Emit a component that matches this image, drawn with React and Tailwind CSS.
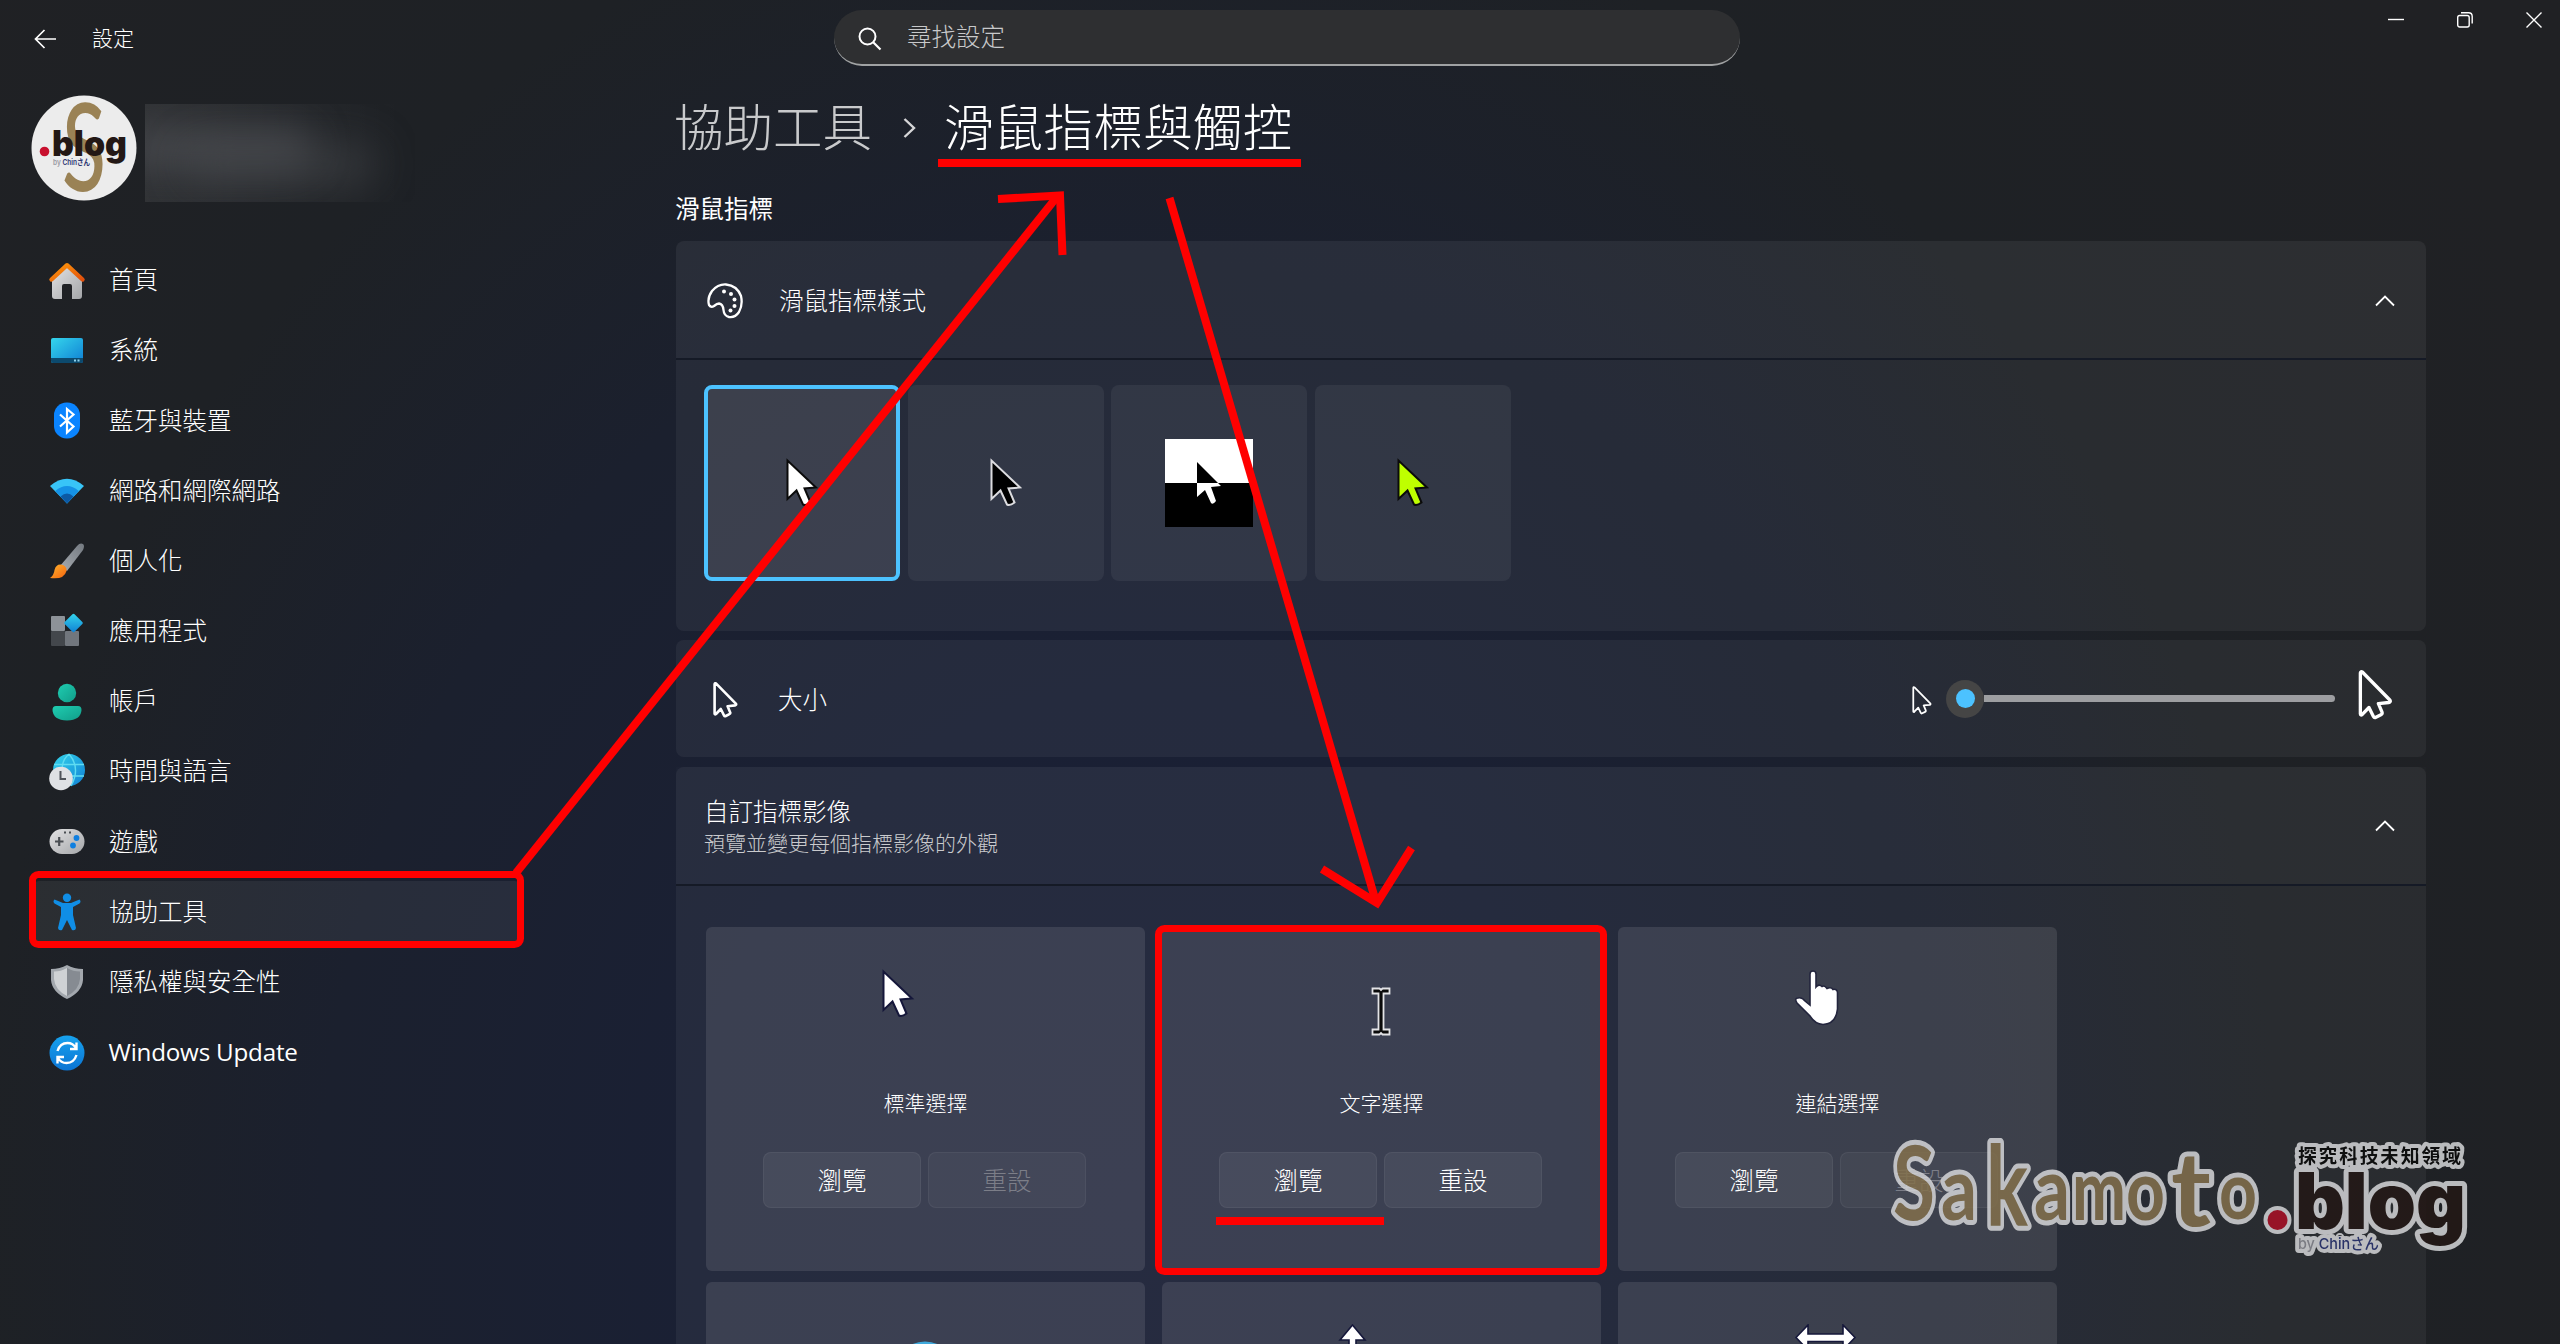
import React, { useState } from "react";

const CursorOutline = ({ className, strokeWidth = 2.6 }) => (
  <svg viewBox="0 0 25 36" fill="none" className={className}>
    <path
      d="M1.6 2.2V31.5Q1.8 33 3 32L7.8 27L11 33.4Q11.6 34.6 12.8 34L16.4 32.2Q17.6 31.6 17.2 30.4L14.6 24.2L22 23.4Q23.8 23 22.8 21.6L3.2 1.6Q1.8 .6 1.6 2.2Z"
      stroke="white"
      strokeWidth={strokeWidth}
      strokeLinejoin="round"
    />
  </svg>
);

const Pointer = ({ fill, stroke }) => (
  <path
    d="M1.5 2.5V41L10.5 32.5L17 46.5Q20 48 24.5 44.5L18.5 30.5L30 29.5Z"
    fill={fill}
    stroke={stroke}
    strokeWidth="2"
  />
);

const ChevronUp = () => (
  <svg viewBox="0 0 20 12" fill="none" className="h-3 w-5">
    <path d="M1 10.5L10 1.5L19 10.5" stroke="white" strokeWidth="1.8" />
  </svg>
);

const navIcons = {
  home: (
    <>
      <path d="M4 17L19 5L34 17V34Q34 37 31 37H24V24Q24 22 22 22H16Q14 22 14 24V37H7Q4 37 4 34Z" fill="url(#silver)" />
      <path d="M3.5 17.5L19 3.2L34.5 17.5" fill="none" stroke="url(#orange)" strokeWidth="4.4" strokeLinecap="round" strokeLinejoin="round" />
    </>
  ),
  system: (
    <>
      <rect x="3" y="6" width="32" height="25" rx="2" fill="url(#sky)" />
      <path d="M3 26H35V29Q35 31 33 31H5Q3 31 3 29Z" fill="#0c4a6e" />
      <path d="M26 28.5H28M29.5 28.5H31.5" stroke="#8fd3ee" strokeWidth="1.8" />
    </>
  ),
  bluetooth: (
    <>
      <rect x="6" y="0.5" width="26" height="36" rx="12.5" fill="#0a84ff" />
      <path d="M12 12.5L25.5 24.5L19 30.5V7L25.5 12.5L12 24.5" fill="none" stroke="white" strokeWidth="2.2" />
    </>
  ),
  network: (
    <>
      <path d="M2 14Q19 -0.5 36 14L19 31.5Z" fill="#38c5f8" />
      <path d="M7.2 19Q19 9 30.8 19L19 31.5Z" fill="#1592e6" />
      <path d="M12.5 24.5Q19 18.5 25.5 24.5L19 31.5Z" fill="#0c59a4" />
    </>
  ),
  brush: (
    <>
      <path d="M12 24L29 4Q32 0.5 35 2Q37 3.5 35 8L19 29Z" fill="url(#steel)" />
      <path d="M2 36Q6 33 6.500 28Q8 22 13 22.500Q19 23.500 18.500 29Q16 38 2 36Z" fill="url(#flame)" />
    </>
  ),
  apps: (
    <>
      <rect x="3" y="4" width="14" height="15" rx="1" fill="#8d9298" />
      <rect x="3" y="19" width="14" height="15" rx="1" fill="#43474c" />
      <rect x="17" y="19" width="14" height="15" rx="1" fill="#71767d" />
      <rect x="18.500" y="4" width="14" height="14" rx="1.500" fill="url(#sky)" transform="rotate(45 25.5 11)" />
    </>
  ),
  account: (
    <>
      <circle cx="19" cy="10" r="9.200" fill="url(#teal)" />
      <path d="M8 23H30Q33.500 23 33.500 27Q33 37 19 37.500Q5 37 4.500 27Q4.500 23 8 23Z" fill="url(#teal)" />
    </>
  ),
  time: (
    <>
      <circle cx="21" cy="17" r="16" fill="url(#sky)" />
      <path d="M6 11.500H36M18 23H36M21 1Q11 10 16 22M21 1Q33 15 23 33" fill="none" stroke="#5fdcf1" strokeWidth="1.400" />
      <circle cx="13" cy="25.500" r="11.800" fill="#dfe1e4" />
      <path d="M12.500 18V26H18" fill="none" stroke="#50545a" strokeWidth="2" />
    </>
  ),
  gaming: (
    <>
      <rect x="1.500" y="6" width="35" height="25" rx="12.500" fill="url(#silver)" />
      <path d="M7 18.500H15.500M11.200 14V23" stroke="#4a4e53" strokeWidth="2.200" />
      <circle cx="28.500" cy="15" r="2.900" fill="#0f7fe0" />
      <circle cx="25" cy="22.500" r="2.900" fill="#0f7fe0" />
      <path d="M16 9.500H18M21 9.500H23" stroke="#4a4e53" strokeWidth="2" />
    </>
  ),
  access: (
    <g fill="#108ee6">
      <circle cx="19" cy="4.800" r="4.200" />
      <path d="M6.500 6.500Q4.500 8.500 6.500 10.500L13 14V22L10 35Q10.500 38 14 37L19 27L24 37Q27.500 38 28 35L25 22V14L31.500 10.500Q33.500 8.500 31.500 6.500L23 10H15Z" />
    </g>
  ),
  shield: (
    <>
      <path d="M19 2Q26 6 35 6V17Q34 29 19 36Q4 29 3 17V6Q12 6 19 2Z" fill="#a3a8ae" />
      <path d="M19 5V33Q7 27 6 16V8.500Q13 8.500 19 5Z" fill="#cfd2d5" />
      <path d="M19 5V33Q31 27 32 16V8.500Q25 8.500 19 5Z" fill="#868b92" />
    </>
  ),
  update: (
    <>
      <circle cx="19" cy="19" r="17.500" fill="url(#azure)" />
      <path d="M9.500 17Q12 9 19.500 9Q25 9 28 14M28.500 8.500V15H22M28.500 21Q26 29 18.500 29Q13 29 10 24M9.500 29.500V23H16" fill="none" stroke="white" strokeWidth="2.400" />
    </>
  ),
};

const navItems = [
  { id: "home", label: "首頁" },
  { id: "system", label: "系統" },
  { id: "bluetooth", label: "藍牙與裝置" },
  { id: "network", label: "網路和網際網路" },
  { id: "brush", label: "個人化" },
  { id: "apps", label: "應用程式" },
  { id: "account", label: "帳戶" },
  { id: "time", label: "時間與語言" },
  { id: "gaming", label: "遊戲" },
  { id: "access", label: "協助工具" },
  { id: "shield", label: "隱私權與安全性" },
  { id: "update", label: "Windows Update", latin: true },
];

const pointerTiles = [
  {
    id: "normal",
    label: "標準選擇",
    canReset: false,
    art: (
      <g transform="translate(4 0)">
        <Pointer fill="white" stroke="#15173a" />
      </g>
    ),
  },
  {
    id: "text",
    label: "文字選擇",
    canReset: true,
    art: (
      <g transform="translate(37.5 18.5)">
        <path d="M1 1H8L9.500 2.500L11 1H18V6H12V42H18V47H11L9.500 45.500L8 47H1V42H7V6H1Z" fill="#0a0a0a" stroke="#e3e3e6" strokeWidth="1.800" />
      </g>
    ),
  },
  {
    id: "link",
    label: "連結選擇",
    canReset: false,
    art: (
      <path
        d="M20 5Q20 2 23 2Q26 2 26 5V18Q29 14.500 32 17.500Q34.500 16 37 19.500Q41 17.500 43 20.500Q47 19.500 47.500 23.500V40Q46 55 33 55.500Q25 55 20 47L7 34Q4 29 8 29Q12 28 15 32L20 36Z"
        fill="white"
        stroke="#23253d"
        strokeWidth="1.600"
      />
    ),
  },
  {
    id: "background",
    art: <circle cx="47" cy="48" r="27" fill="none" stroke="#3fa9dc" strokeWidth="7" />,
  },
  {
    id: "vertical",
    art: <path d="M18.500 1L31 16H22V60H15V16H6Z" fill="white" stroke="#15173a" strokeWidth="1.600" />,
  },
  {
    id: "horizontal",
    art: <path d="M6 13.500L18 1V10H53V1L65 13.500L53 26V17.500H18V26Z" fill="white" stroke="#15173a" strokeWidth="1.600" />,
  },
];

const NavGradients = () => (
  <svg className="absolute h-0 w-0">
    <defs>
      <linearGradient id="silver" x1="0" y1="0" x2="1" y2="1">
        <stop offset="0" stopColor="#e2e2e3" />
        <stop offset="1" stopColor="#a4a6a9" />
      </linearGradient>
      <linearGradient id="orange" x1="0" y1="0" x2="1" y2="1">
        <stop offset="0" stopColor="#ff9a0a" />
        <stop offset="1" stopColor="#e2500c" />
      </linearGradient>
      <linearGradient id="sky" x1="0" y1="0" x2="1" y2="1">
        <stop offset="0" stopColor="#35d6ec" />
        <stop offset="1" stopColor="#0f7fd4" />
      </linearGradient>
      <linearGradient id="steel" x1="1" y1="0" x2="0" y2="1">
        <stop offset="0" stopColor="#737980" />
        <stop offset="1" stopColor="#a7acb1" />
      </linearGradient>
      <linearGradient id="flame" x1="0" y1="0" x2="1" y2="1">
        <stop offset="0" stopColor="#ffb62e" />
        <stop offset="1" stopColor="#f5640f" />
      </linearGradient>
      <linearGradient id="teal" x1="0" y1="0" x2="1" y2="1">
        <stop offset="0" stopColor="#1fcdb1" />
        <stop offset="1" stopColor="#119d89" />
      </linearGradient>
      <linearGradient id="azure" x1="0" y1="0" x2="0" y2="1">
        <stop offset="0" stopColor="#17a2ee" />
        <stop offset="1" stopColor="#0b74d3" />
      </linearGradient>
    </defs>
  </svg>
);

const TitleBar = () => (
  <header className="flex h-[76px] shrink-0">
    <div className="flex w-[834px] items-center pl-[34px] pt-0.5">
      <svg viewBox="0 0 22 20" fill="none" className="h-5 w-[22px]">
        <path d="M22 10H1.500M10.500 1L1.500 10L10.500 19" stroke="white" strokeWidth="1.700" />
      </svg>
      <span className="ml-9 text-[21px]">設定</span>
    </div>
    <div className="mt-2.5 flex h-14 w-[906px] items-center rounded-full border-b-2 border-[#a0a2a3] bg-[#2e2f31] pl-6">
      <svg viewBox="0 0 24 24" fill="none" className="mt-1 h-6 w-6">
        <circle cx="9.500" cy="9.500" r="8" stroke="white" strokeWidth="2" />
        <path d="M15 15L22.500 22.500" stroke="white" strokeWidth="2.200" />
      </svg>
      <span className="ml-[25px] text-[24.5px] text-[#c8c9ca]">尋找設定</span>
    </div>
    <div className="ml-auto flex gap-[53px] pr-[18px] pt-3">
      <svg viewBox="0 0 16 16" fill="none" stroke="white" className="h-4 w-4">
        <path d="M0 7.500H16" strokeWidth="1.400" />
      </svg>
      <svg viewBox="0 0 16 16" fill="none" stroke="white" strokeWidth="1.400" className="h-4 w-4">
        <rect x="0.700" y="3.500" width="11.500" height="11.500" rx="2" />
        <path d="M4 0.800H11.500Q15.200 0.800 15.200 4.500V11.500" />
      </svg>
      <svg viewBox="0 0 16 16" fill="none" stroke="white" strokeWidth="1.400" className="h-4 w-4">
        <path d="M0.500 0.500L15.500 15.500M15.500 0.500L0.500 15.500" />
      </svg>
    </div>
  </header>
);

const Avatar = () => (
  <svg viewBox="0 0 106 106" className="h-[106px] w-[106px] overflow-visible">
    <circle cx="53" cy="53" r="52.500" fill="#ececec" />
    <text x="31" y="96" fontSize="122" textLength="44" lengthAdjust="spacingAndGlyphs" fill="#9a8255" className="font-['Lato'] font-medium">
      S
    </text>
    <circle cx="13.500" cy="56.500" r="4.800" fill="#c8102e" />
    <text x="21" y="61" fontSize="35" textLength="75" lengthAdjust="spacingAndGlyphs" fill="#231815" className="font-['Inter'] font-black">
      blog
    </text>
    <text x="22" y="70" fontSize="7.500" textLength="37" lengthAdjust="spacingAndGlyphs" fill="#2b3572" className="font-['Inter','Noto_Sans_CJK_JP'] font-semibold">
      <tspan fill="#9a9aa2">by </tspan>Chinさん
    </text>
  </svg>
);

const Sidebar = ({ active, onSelect }) => (
  <aside className="w-[676px] shrink-0 pt-[19px]">
    <div className="flex items-start pl-[31px]">
      <Avatar />
      {/* blurred account name */}
      <div className="relative ml-2 mt-[9px] h-[98px] w-[270px] overflow-hidden bg-linear-to-r from-white/8 to-transparent to-95%">
        <div className="absolute -left-6 top-6 h-10 w-48 rounded-full bg-[#54555a]/60 blur-[18px]" />
        <div className="absolute left-10 top-10 h-10 w-48 rounded-full bg-[#4a4b50]/50 blur-[20px]" />
      </div>
    </div>
    <nav className="mt-[47px] flex flex-col gap-[7.2px] pl-[33px]">
      {navItems.map((item) => (
        <button
          key={item.id}
          onClick={() => onSelect(item.id)}
          className={`flex h-[63px] w-[488px] items-center rounded-md pl-[14.5px] text-left text-[24.5px] ${
            item.id === active ? "bg-white/6" : ""
          }`}
        >
          <svg viewBox="0 0 38 38" className="h-[38px] w-[38px]">
            {navIcons[item.id]}
          </svg>
          <span className={item.latin ? "ml-[23px] text-[24.2px] font-normal tracking-[-0.2px]" : "ml-[23.5px]"}>
            {item.label}
          </span>
        </button>
      ))}
    </nav>
  </aside>
);

const swatches = [
  { id: "white", fill: "white", stroke: "#0b0b0b" },
  { id: "black", fill: "black", stroke: "#dcdcdf" },
  { id: "inverted" },
  { id: "custom", fill: "#bfff00", stroke: "#0b0b0b" },
];

const Swatch = ({ item, selected, onClick }) => (
  <button
    onClick={onClick}
    className={`flex h-[196px] w-[196px] items-center justify-center rounded-lg ${
      selected ? "border-4 border-[#4cc2ff] bg-white/10" : "bg-white/6"
    }`}
  >
    {item.id === "inverted" ? (
      <svg viewBox="0 0 88 88" className="h-[88px] w-[88px]">
        <rect width="88" height="44" fill="white" />
        <rect y="44" width="88" height="44" fill="black" />
        <path d="M32 23L53 44H32Z" fill="black" />
        <path d="M32 44H53L56 47L46 48L51 62Q48 66 46 64L40 51L32 58Z" fill="white" />
      </svg>
    ) : (
      <svg viewBox="0 0 32 50" className="h-[50px] w-8">
        <Pointer fill={item.fill} stroke={item.stroke} />
      </svg>
    )}
  </button>
);

const PointerTile = ({ tile }) => (
  <div className="flex h-[344px] w-[439px] flex-col items-center rounded-md bg-white/10 pt-[42px]">
    <svg viewBox="0 0 96 96" className="h-24 w-24 shrink-0">
      {tile.art}
    </svg>
    {tile.label && (
      <>
        <div className="mt-6 h-[30px] text-[21px] leading-[29px]">{tile.label}</div>
        <div className="mt-[33px] flex gap-[7px] pr-0.5">
          <button className="h-14 w-[158px] rounded-lg border border-white/5 bg-white/6 pt-0.5 text-[24.5px]">瀏覽</button>
          <button
            className={`h-14 w-[158px] rounded-lg border border-white/5 pt-0.5 text-[24.5px] ${
              tile.canReset ? "bg-white/6" : "bg-white/4 text-[#7c7e88]"
            }`}
          >
            重設
          </button>
        </div>
      </>
    )}
  </div>
);

const Annotations = () => (
  <svg viewBox="0 0 2560 1344" fill="none" stroke="#ff0000" className="pointer-events-none absolute inset-0 h-[1344px] w-[2560px]">
    <rect x="32.500" y="874.500" width="488" height="70" rx="6" strokeWidth="7" />
    <path d="M516 873L1056 198" strokeWidth="8" />
    <path d="M998 199L1060 195.500L1062.500 255" strokeWidth="8" />
    <path d="M938 163H1301" strokeWidth="8" />
    <path d="M1169.500 198L1376 902" strokeWidth="8" />
    <path d="M1322 869L1377 903L1411.500 848" strokeWidth="8" />
    <rect x="1158.500" y="928.500" width="445" height="343" rx="6" strokeWidth="7" />
    <path d="M1216 1221H1384" strokeWidth="8" />
  </svg>
);

const markLetters = [
  { c: "S", x: 1893, y: 1220, size: 104, w: 42 },
  { c: "a", x: 1941, y: 1220, size: 88, w: 36 },
  { c: "k", x: 1986, y: 1226, size: 112, w: 42 },
  { c: "a", x: 2034, y: 1220, size: 88, w: 36 },
  { c: "m", x: 2072, y: 1220, size: 84, w: 54 },
  { c: "o", x: 2126, y: 1220, size: 84, w: 39 },
  { c: "t", x: 2171, y: 1226, size: 104, w: 40 },
  { c: "o", x: 2219, y: 1219, size: 80, w: 38 },
];

const Watermark = () => (
  <svg
    viewBox="1880 1130 600 140"
    strokeLinejoin="round"
    className="pointer-events-none absolute left-[1880px] top-[1130px] h-[140px] w-[600px] overflow-visible opacity-85"
  >
    <g className="font-['Lato'] font-bold" fill="#83704c" stroke="#d5d6d8" strokeWidth="10" paintOrder="stroke">
      {markLetters.map((l) => (
        <text key={l.x} x={l.x} y={l.y} fontSize={l.size} textLength={l.w} lengthAdjust="spacingAndGlyphs">
          {l.c}
        </text>
      ))}
    </g>
    <circle cx="2277.500" cy="1220" r="14" fill="#d5d6d8" />
    <circle cx="2277.500" cy="1220" r="10" fill="#ab0f26" />
    <g stroke="#d5d6d8" paintOrder="stroke">
      <text x="2295" y="1229" fontSize="78" textLength="171" lengthAdjust="spacingAndGlyphs" fill="#231815" strokeWidth="10" className="font-['Inter'] font-black">
        blog
      </text>
      <text x="2298" y="1162.500" fontSize="19" textLength="163" fill="#0a0a0a" strokeWidth="8" className="font-['Noto_Sans_CJK_TC'] font-bold">
        探究科技未知領域
      </text>
      <text x="2298" y="1249" fontSize="15" textLength="81" lengthAdjust="spacingAndGlyphs" fill="#2b3572" strokeWidth="8" className="font-['Inter','Noto_Sans_CJK_JP'] font-medium">
        <tspan fill="#8a8a92">by </tspan>Chinさん
      </text>
    </g>
  </svg>
);

export default function App() {
  const [active, setActive] = useState("access");
  const [style, setStyle] = useState("white");

  return (
    <div className="relative flex h-[1344px] w-[2560px] flex-col overflow-hidden bg-[radial-gradient(ellipse_1150px_1341px_at_1130px_1200px,#1b2036_0%,#1a2034_38%,#1b202e_70%,#1e2125_100%,#202124_140%)] font-['Open_Sans','Noto_Sans_CJK_TC',sans-serif] font-light text-white">
      <NavGradients />
      <TitleBar />

      <div className="flex min-h-0 flex-1">
        <Sidebar active={active} onSelect={setActive} />

        <main className="w-[1750px] shrink-0 pt-[21px]">
          {/* Breadcrumb */}
          <h1 className="-ml-[2px] flex h-[60px] items-center text-[49.5px] leading-[60px]">
            <span className="text-[#c9cacc]">協助工具</span>
            <svg viewBox="0 0 13 20" fill="none" className="ml-[31px] mt-0.5 h-5 w-[13px]">
              <path d="M1.500 1L11 10L1.500 19" stroke="#d6d6d8" strokeWidth="2.400" />
            </svg>
            <span className="ml-[28px] tracking-[0.3px]">滑鼠指標與觸控</span>
          </h1>

          <h2 className="-ml-px mt-[34px] h-9 text-[24.5px] leading-9 font-normal">滑鼠指標</h2>

          {/* Pointer style */}
          <section className="mt-3.5 h-[390px] overflow-hidden rounded-lg bg-white/5">
            <div className="flex h-[119px] items-center border-b-2 border-[#151a26] bg-white/1 pl-[31px] pr-[31px] pt-0.5">
              <svg viewBox="0 0 36 36" fill="none" className="h-9 w-9">
                <path
                  d="M2 22Q0 15 5 8Q11 1 19 1.500Q30 2.500 34 13Q36 22 32 29Q28 35 22 34Q17 33 16.500 27Q16 21 12 20.500Q10 20.500 7 23Q4 25 2 22Z"
                  stroke="white"
                  strokeWidth="2.300"
                />
                <g fill="white">
                  <circle cx="17" cy="8.500" r="2" />
                  <circle cx="24" cy="11" r="2" />
                  <circle cx="27.500" cy="16.500" r="2" />
                  <circle cx="27.500" cy="23" r="2" />
                  <circle cx="23.500" cy="27.500" r="2" />
                </g>
              </svg>
              <span className="ml-9 pt-px text-[24.5px]">滑鼠指標樣式</span>
              <span className="ml-auto">
                <ChevronUp />
              </span>
            </div>
            <div className="flex gap-[7.5px] pl-7 pt-[25px]">
              {swatches.map((item) => (
                <Swatch key={item.id} item={item} selected={item.id === style} onClick={() => setStyle(item.id)} />
              ))}
            </div>
          </section>

          {/* Size */}
          <section className="mt-[9px] flex h-[117px] items-center rounded-lg bg-white/5 pl-[37px] pr-[33px]">
            <CursorOutline className="mt-0.5 h-9 w-[25px]" />
            <span className="ml-10 pt-[3px] text-[24.5px]">大小</span>
            <div className="ml-auto flex items-center">
              <CursorOutline className="mt-1 h-[29px] w-5" strokeWidth={2.2} />
              <div className="ml-[14px] flex items-center">
                <div className="flex h-[38px] w-[38px] items-center justify-center rounded-full bg-[#454545]">
                  <div className="h-[19px] w-[19px] rounded-full bg-[#4cc2ff]" />
                </div>
                <div className="h-[7px] w-[351px] rounded-r-full bg-[#9d9ea1]" />
              </div>
              <CursorOutline className="-mt-2 ml-[23px] h-[50px] w-[35px]" strokeWidth={2.4} />
            </div>
          </section>

          {/* Custom pointer images */}
          <section className="mt-2.5 h-[700px] rounded-t-lg bg-white/5">
            <div className="flex h-[119px] items-center justify-between border-b-2 border-[#151a26] bg-white/1 pl-7 pr-[31px]">
              <div className="pt-[3px]">
                <div className="text-[24.5px] leading-8">自訂指標影像</div>
                <div className="text-[21px] leading-[30px] text-[#c9cacd]">預覽並變更每個指標影像的外觀</div>
              </div>
              <ChevronUp />
            </div>
            <div className="grid grid-cols-[439px_439px_439px] gap-x-[17px] gap-y-[11px] pl-[30px] pt-[41px]">
              {pointerTiles.map((tile) => (
                <PointerTile key={tile.id} tile={tile} />
              ))}
            </div>
          </section>
        </main>
      </div>

      <Annotations />
      <Watermark />
    </div>
  );
}
